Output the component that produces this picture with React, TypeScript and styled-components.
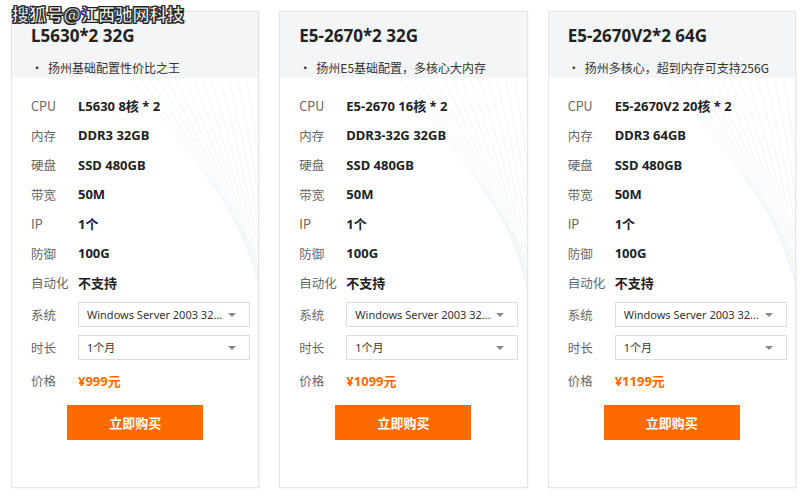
import React from 'react';
import styled, { createGlobalStyle } from 'styled-components';

const GlobalStyle = createGlobalStyle`
  html, body {
    margin: 0;
    padding: 0;
    background: #fff;
  }
  body {
    font-family: "Noto Sans", "Noto Sans CJK SC", sans-serif;
    color: #333;
  }
`;

const Page = styled.div`
  position: relative;
  width: 805px;
  height: 500px;
  padding: 11px 9px 0 11px;
  box-sizing: border-box;
  display: flex;
  gap: 20px;
  overflow: hidden;
`;

const Watermark = styled.div`
  position: absolute;
  left: 12px;
  top: 2px;
  font-family: "Noto Sans CJK SC", sans-serif;
  font-size: 17px;
  line-height: 24px;
  font-weight: 700;
  color: #fff;
  letter-spacing: 0.2px;
  -webkit-text-stroke: 0.6px #222;
  text-shadow: 1px 1px 0 #222, -1px -1px 0 #222, 1px -1px 0 #222, -1px 1px 0 #222;
  z-index: 5;
`;

const Card = styled.div`
  position: relative;
  width: 249px;
  height: 477px;
  box-sizing: border-box;
  border: 1px solid #e6e6e6;
  box-shadow: 1px 1px 2px rgba(0, 0, 0, 0.05);
  background: #fff;
  display: flex;
  flex-direction: column;
  overflow: hidden;
`;

const Head = styled.div`
  background: #f4f5f7;
  padding: 12px 19px 0;
  height: 66px;
  box-sizing: border-box;
`;

const Title = styled.div`
  font-size: 17px;
  font-weight: 700;
  line-height: 24px;
  color: #222;
`;

const Desc = styled.div`
  margin-top: 10px;
  font-family: "Noto Sans CJK SC", sans-serif;
  font-size: 12px;
  line-height: 20px;
  color: #333;
  display: flex;
  gap: 5px;

  &::before {
    content: '•';
    color: #333;
  }
`;

const Waves = styled.svg`
  position: absolute;
  left: 0;
  top: 66px;
  width: 100%;
  height: 340px;
  pointer-events: none;
`;

const Body = styled.div`
  position: relative;
  padding: 13px 8px 0 19px;
  display: flex;
  flex-direction: column;
`;

const Row = styled.div<{ $h?: number }>`
  display: flex;
  align-items: center;
  height: ${(p) => p.$h || 29.5}px;
`;

const Label = styled.div`
  width: 47px;
  flex: none;
  font-family: "Noto Sans CJK SC", sans-serif;
  font-size: 12.5px;
  color: #666;
`;

const Value = styled.div<{ $price?: boolean }>`
  font-family: "Noto Sans", "Noto Sans CJK SC", sans-serif;
  font-size: 13px;
  font-weight: 700;
  color: ${(p) => (p.$price ? '#ff6a00' : '#222')};
`;

const Select = styled.div`
  position: relative;
  width: 172px;
  height: 25px;
  box-sizing: border-box;
  border: 1px solid #dcdcdc;
  background: #fff;
  display: flex;
  align-items: center;
  padding: 0 30px 0 8px;
  font-family: "Noto Sans", "Noto Sans CJK SC", sans-serif;
  font-size: 11px;
  color: #333;
  white-space: nowrap;

  &::after {
    content: '';
    position: absolute;
    right: 13px;
    top: 10px;
    border-left: 4px solid transparent;
    border-right: 4px solid transparent;
    border-top: 4px solid #888;
  }
`;

const BuyButton = styled.button`
  align-self: center;
  margin: 8px 0 0 -11px;
  width: 136px;
  height: 35px;
  border: none;
  background: #ff6a00;
  color: #fff;
  font-family: "Noto Sans CJK SC", sans-serif;
  font-size: 13px;
  font-weight: 700;
  cursor: pointer;
`;

type Plan = {
  title: string;
  desc: string;
  cpu: string;
  mem: string;
  disk: string;
  price: string;
};

const plans: Plan[] = [
  { title: 'L5630*2 32G', desc: '扬州基础配置性价比之王', cpu: 'L5630 8核 * 2', mem: 'DDR3 32GB', disk: 'SSD 480GB', price: '¥999元' },
  { title: 'E5-2670*2 32G', desc: '扬州E5基础配置，多核心大内存', cpu: 'E5-2670 16核 * 2', mem: 'DDR3-32G 32GB', disk: 'SSD 480GB', price: '¥1099元' },
  { title: 'E5-2670V2*2 64G', desc: '扬州多核心，超到内存可支持256G', cpu: 'E5-2670V2 20核 * 2', mem: 'DDR3 64GB', disk: 'SSD 480GB', price: '¥1199元' },
];

// faint decorative arcs behind the spec list
const WaveLines = () => (
  <Waves viewBox="0 0 249 340" preserveAspectRatio="none">
    {Array.from({ length: 14 }).map((_, i) => (
      <path
        key={i}
        d={`M ${120 + i * 9} 0 Q ${220 + i * 4} ${120 + i * 6} 260 ${200 + i * 10}`}
        fill="none"
        stroke="#f2f4f7"
        strokeWidth="1"
      />
    ))}
  </Waves>
);

const PlanCard = ({ plan }: { plan: Plan }) => (
  <Card>
    <Head>
      <Title>{plan.title}</Title>
      <Desc>{plan.desc}</Desc>
    </Head>
    <WaveLines />
    <Body>
      <Row><Label>CPU</Label><Value>{plan.cpu}</Value></Row>
      <Row><Label>内存</Label><Value>{plan.mem}</Value></Row>
      <Row><Label>硬盘</Label><Value>{plan.disk}</Value></Row>
      <Row><Label>带宽</Label><Value>50M</Value></Row>
      <Row><Label>IP</Label><Value>1个</Value></Row>
      <Row><Label>防御</Label><Value>100G</Value></Row>
      <Row><Label>自动化</Label><Value>不支持</Value></Row>
      <Row $h={33}><Label>系统</Label><Select>Windows Server 2003 32...</Select></Row>
      <Row $h={33}><Label>时长</Label><Select>1个月</Select></Row>
      <Row $h={33}><Label>价格</Label><Value $price>{plan.price}</Value></Row>
      <BuyButton>立即购买</BuyButton>
    </Body>
  </Card>
);

export default function App() {
  return (
    <>
      <GlobalStyle />
      <Page>
        <Watermark>搜狐号@江西驰网科技</Watermark>
        {plans.map((p) => (
          <PlanCard key={p.title} plan={p} />
        ))}
      </Page>
    </>
  );
}
